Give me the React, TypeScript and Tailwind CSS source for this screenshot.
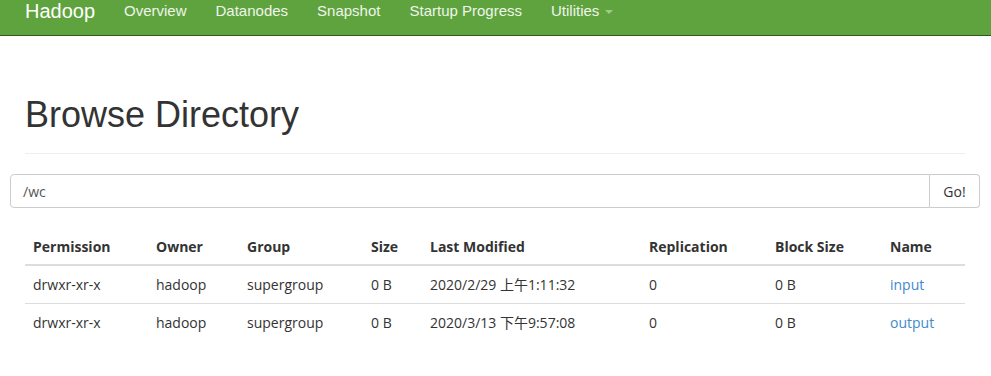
import React from "react";

const rows = [
  { perm: "drwxr-xr-x", owner: "hadoop", group: "supergroup", size: "0 B", mod: "2020/2/29 上午1:11:32", rep: "0", bs: "0 B", name: "input" },
  { perm: "drwxr-xr-x", owner: "hadoop", group: "supergroup", size: "0 B", mod: "2020/3/13 下午9:57:08", rep: "0", bs: "0 B", name: "output" },
];

const cols = ["w-[123px]", "w-[91px]", "w-[124px]", "w-[59px]", "w-[219px]", "w-[126px]", "w-[115px]", ""];
const heads = ["Permission", "Owner", "Group", "Size", "Last Modified", "Replication", "Block Size", "Name"];

export default function App() {
  return (
    <div className="w-[991px] h-[376px] bg-white overflow-hidden">
      <div className="h-[36px] bg-[#5fa33e] border-b border-[#2d5a1c] flex items-start" style={{ fontFamily: '"Liberation Sans", Arial, sans-serif' }}>
        <div className="ml-[25px] mt-[-1px] w-[99px] text-[20px] text-white leading-[24px]">Hadoop</div>
        <div className="flex text-[15px] text-[#eef5ea] leading-[22px]">
          <span className="mr-[29px]">Overview</span>
          <span className="mr-[29px]">Datanodes</span>
          <span className="mr-[29px]">Snapshot</span>
          <span className="mr-[29px]">Startup Progress</span>
          <span className="flex items-center">
            Utilities
            <span className="ml-[6px] mt-[1px] w-0 h-0 border-l-[4px] border-r-[4px] border-t-[4px] border-l-transparent border-r-transparent border-t-[#9fcb8a]" />
          </span>
        </div>
      </div>
      <div className="px-[25px]">
        <h1 className="mt-[59px] text-[36px] leading-[40px] text-[#333] font-normal" style={{ fontFamily: '"Liberation Sans", Arial, sans-serif' }}>
          Browse Directory
        </h1>
        <div className="mt-[18px] w-[940px] border-t border-[#eee]" />
      </div>
      <div className="ml-[10px] mt-[20px] flex w-[970px] h-[34px]" style={{ fontFamily: '"Open Sans", "Noto Sans", sans-serif' }}>
        <div className="flex-1 border border-[#ccc] rounded-l-[4px] flex items-center pl-[12px] text-[14px] text-[#555]">/wc</div>
        <div className="w-[50px] border border-l-0 border-[#ccc] rounded-r-[4px] flex items-center justify-center text-[14px] text-[#333]">Go!</div>
      </div>
      <div className="ml-[25px] mt-[20px] w-[940px] text-[14px] text-[#333]" style={{ fontFamily: '"Open Sans", "Noto Sans", "Noto Sans CJK SC", sans-serif' }}>
        <div className="flex h-[38px] items-center border-b-2 border-[#ddd] font-bold">
          {heads.map((h, i) => (
            <div key={h} className={`${cols[i]} px-[8px] shrink-0`}>{h}</div>
          ))}
        </div>
        {rows.map((r, ri) => (
          <div key={ri} className={`flex h-[37px] items-center ${ri > 0 ? "border-t border-[#ddd]" : ""}`}>
            <div className={`${cols[0]} px-[8px] shrink-0`}>{r.perm}</div>
            <div className={`${cols[1]} px-[8px] shrink-0`}>{r.owner}</div>
            <div className={`${cols[2]} px-[8px] shrink-0`}>{r.group}</div>
            <div className={`${cols[3]} px-[8px] shrink-0`}>{r.size}</div>
            <div className={`${cols[4]} px-[8px] shrink-0`}>{r.mod}</div>
            <div className={`${cols[5]} px-[8px] shrink-0`}>{r.rep}</div>
            <div className={`${cols[6]} px-[8px] shrink-0`}>{r.bs}</div>
            <div className="px-[8px] text-[#4289cc]">{r.name}</div>
          </div>
        ))}
      </div>
    </div>
  );
}
